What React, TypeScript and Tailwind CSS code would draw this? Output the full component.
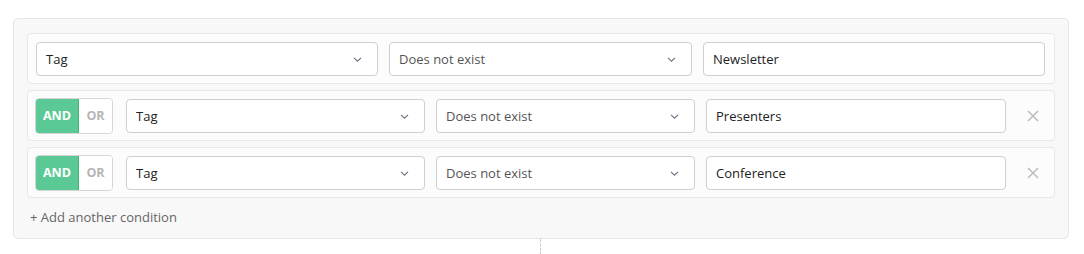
import React from 'react';

const Chevron = () => (
  <svg width="9" height="5" viewBox="0 0 9 5" className="text-gray-500">
    <path d="M1 0.8l3.5 3.4 3.5-3.4" fill="none" stroke="currentColor" strokeWidth="1.1" />
  </svg>
);

const Select = ({ value, w, muted }: { value: string; w: string; muted?: boolean }) => (
  <div
    className={`${w} h-[34px] shrink-0 flex items-center justify-between rounded-[4px] border border-[#cfcfcf] bg-white pl-[9px] pr-[15px] pt-[2px] text-[13px] ${
      muted ? 'text-[#555]' : 'text-[#222]'
    }`}
  >
    <span>{value}</span>
    <Chevron />
  </div>
);

const TextInput = ({ value, w }: { value: string; w: string }) => (
  <div className={`${w} h-[34px] shrink-0 flex items-center rounded-[4px] border border-[#cfcfcf] bg-white pl-[9px] pt-[2px] text-[13px] text-[#222]`}>
    {value}
  </div>
);

const Toggle = () => (
  <div className="flex h-[36px] w-[78px] shrink-0 overflow-hidden rounded-[4px] border border-[#d6d6d6] text-[12.5px] font-bold">
    <div className="flex w-[43px] items-center justify-center bg-[#5bc995] pt-[1px] text-white border-r border-[#47b37f]">AND</div>
    <div className="flex flex-1 items-center justify-center bg-white pt-[1px] text-[#b5b5b5]">OR</div>
  </div>
);

const CloseX = () => (
  <div className="flex w-[54px] shrink-0 items-center justify-center">
    <svg width="12" height="12" viewBox="0 0 12 12">
      <path d="M1 1l10 10M11 1l-10 10" stroke="#bcbcbc" strokeWidth="1.5" />
    </svg>
  </div>
);

const conditions = ['Presenters', 'Conference'];

export default function App() {
  return (
    <div className="h-[254px] w-[1084px] bg-white pt-[18px] pl-[13px]" style={{ fontFamily: '"Open Sans", "Liberation Sans", sans-serif' }}>
      <div className="w-[1056px] h-[221px] rounded-[5px] border border-[#e6e6e6] bg-[#f8f8f8] px-[13px] pt-[14px]">
        <div className="flex flex-col gap-[6px]">
          <div className="flex h-[51px] items-center gap-[11px] rounded-[4px] border border-[#e8e8e8] bg-[#fcfcfc] px-[8px]">
            <Select value="Tag" w="w-[342px]" />
            <Select value="Does not exist" w="w-[303px]" muted />
            <TextInput value="Newsletter" w="w-[342px]" />
          </div>
          {conditions.map((c) => (
            <div key={c} className="flex h-[51px] items-center rounded-[4px] border border-[#e8e8e8] bg-[#fcfcfc] px-[7px]">
              <Toggle />
              <div className="ml-[13px] flex gap-[11px]">
                <Select value="Tag" w="w-[299px]" />
                <Select value="Does not exist" w="w-[259px]" muted />
                <TextInput value={c} w="w-[300px]" />
              </div>
              <CloseX />
            </div>
          ))}
        </div>
        <div className="mt-[10px] pl-[3px] text-[13px] text-[#666]">+ Add another condition</div>
      </div>
      <div className="ml-[527px] h-[16px] w-0 border-l border-dashed border-[#c8c8c8]" />
    </div>
  );
}
